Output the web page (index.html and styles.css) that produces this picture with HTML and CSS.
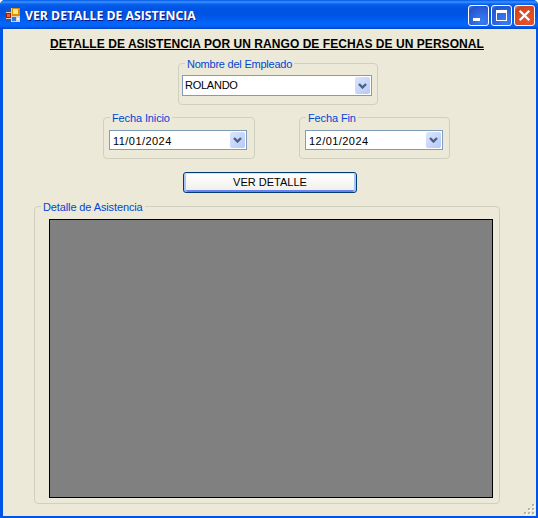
FILE: index.html
```html
<!DOCTYPE html>
<html lang="es">
<head>
<meta charset="utf-8">
<title>VER DETALLE DE ASISTENCIA</title>
<link rel="stylesheet" href="styles.css">
</head>
<body>
<div class="window">
  <header class="titlebar">
    <svg class="app-icon" width="14" height="14" viewBox="0 0 14 14" shape-rendering="crispEdges">
      <rect width="14" height="14" fill="#d6d3c8"/>
      <rect width="5" height="4" fill="#1855c0"/>
      <rect y="5" width="5" height="5" fill="#a91508"/><rect x="1" y="6" width="3" height="3" fill="#ef5737"/>
      <rect x="6" width="8" height="8" fill="#d99000"/><rect x="7" y="1" width="5" height="5" fill="#ffe482"/>
      <rect y="11" width="5" height="3" fill="#2459b0"/><rect x="6" y="9" width="4" height="4" fill="#3977d4"/>
      <rect x="11" y="10" width="2" height="2" fill="#f7f5ed"/>
    </svg>
    <h1 class="title"><span class="title-text">VER DETALLE DE ASISTENCIA</span></h1>
    <div class="controls">
      <button class="control" aria-label="Minimizar"><svg width="19" height="19" shape-rendering="crispEdges"><path d="M4 12h7v3H4z" fill="#fff"/></svg></button>
      <button class="control" aria-label="Maximizar"><svg width="19" height="19" shape-rendering="crispEdges"><path fill-rule="evenodd" d="M4 4h11v11H4zM5 7h9v7H5z" fill="#fff"/></svg></button>
      <button class="control close" aria-label="Cerrar"><svg width="19" height="19"><path d="M4.7 4.7l9.6 9.6M14.3 4.7l-9.6 9.6" stroke="#fff" stroke-width="2.3"/></svg></button>
    </div>
  </header>
  <main class="form">
    <h2 class="heading"><span class="heading-text">DETALLE DE ASISTENCIA POR UN RANGO DE FECHAS DE UN PERSONAL</span></h2>
    <section class="group employee">
      <span class="legend">Nombre del Empleado</span>
      <div class="combo"><span class="value">ROLANDO</span><span class="arrow"><svg width="9" height="6" viewBox="0 0 9 6"><path d="M1 1l3.5 3.5L8 1" fill="none" stroke="#4d6185" stroke-width="2.4"/></svg></span></div>
    </section>
    <div class="dates">
      <section class="group date">
        <span class="legend">Fecha Inicio</span>
        <div class="combo"><span class="value">11/01/2024</span><span class="arrow"><svg width="9" height="6" viewBox="0 0 9 6"><path d="M1 1l3.5 3.5L8 1" fill="none" stroke="#4d6185" stroke-width="2.4"/></svg></span></div>
      </section>
      <section class="group date end">
        <span class="legend">Fecha Fin</span>
        <div class="combo"><span class="value">12/01/2024</span><span class="arrow"><svg width="9" height="6" viewBox="0 0 9 6"><path d="M1 1l3.5 3.5L8 1" fill="none" stroke="#4d6185" stroke-width="2.4"/></svg></span></div>
      </section>
    </div>
    <button class="detail-button"><span>VER DETALLE</span></button>
    <section class="group results">
      <span class="legend">Detalle de Asistencia</span>
      <div class="grid"></div>
    </section>
    <svg class="grip" width="12" height="12" shape-rendering="crispEdges">
      <path d="M9 1h2v2H9zM5 5h2v2H5zM9 5h2v2H9zM1 9h2v2H1zM5 9h2v2H5zM9 9h2v2H9z" fill="#fff"/>
      <path d="M8 0h2v2H8zM4 4h2v2H4zM8 4h2v2H8zM0 8h2v2H0zM4 8h2v2H4zM8 8h2v2H8z" fill="#b8b4a2"/>
    </svg>
  </main>
</div>
</body>
</html>
```
FILE: styles.css
```css
* { box-sizing: border-box; }
body { margin: 0; background: #fff; font: 11px/13px "Liberation Sans", Arial, sans-serif; color: #000; }
h1, h2 { margin: 0; }
button { padding: 0; margin: 0; font: inherit; }
svg { display: block; }

.window {
  width: 538px;
  height: 518px;
  display: flex;
  flex-direction: column;
  overflow: hidden;
  background: #0054e3;
  border-radius: 5px 5px 0 0;
}
.titlebar {
  flex: none;
  height: 29px;
  display: flex;
  align-items: flex-start;
  padding: 5px 3px 0 6px;
  background: linear-gradient(#0058e6 0, #3a93ff 2px, #0a62ee 4px, #0054e3 8px, #0054e3 15px, #0364fb 23px, #0364fb 26px, #0046c8 29px);
}
.app-icon { margin-top: 3px; }
.title {
  flex: 1;
  margin: 2px 0 0 5px;
  font: bold 13px/16px "Open Sans", sans-serif;
  color: #fff;
  text-shadow: 1px 1px 0 #0a1883;
  white-space: nowrap;
}
.title-text { display: inline-block; transform: scaleX(.942); transform-origin: left; }
.controls { display: flex; gap: 2px; }
.control {
  width: 21px;
  height: 21px;
  border: 1px solid #fff;
  border-radius: 3px;
  background: radial-gradient(circle at 70% 80%, #3a7df5 0, #2b62dc 55%, #2453cc 80%, #5a86e8 100%);
}
.control.close { background: radial-gradient(circle at 70% 80%, #e6532c 0, #da4a24 55%, #cc4420 80%, #e68a70 100%); }

.form {
  position: relative;
  flex: 1;
  display: flex;
  flex-direction: column;
  margin: 0 2px 2px 3px;
  padding-top: 7px;
  background: #ece9d8;
}
.heading {
  align-self: flex-start;
  width: 434px;
  height: 14px;
  margin-left: 47px;
  border-bottom: 1px solid #000;
  font: bold 12px/16px "Liberation Sans", Arial, sans-serif;
  letter-spacing: .05px;
  white-space: nowrap;
}
.group {
  position: relative;
  display: flex;
  flex-direction: column;
  border: 1px solid #d0d0bf;
  border-radius: 4px;
}
.legend {
  position: absolute;
  top: -6px;
  left: 6px;
  padding: 0 2px;
  background: #ece9d8;
  color: #0046d5;
  letter-spacing: -.12px;
  white-space: nowrap;
}
.employee .legend { letter-spacing: -.23px; }
.combo {
  display: flex;
  justify-content: space-between;
  align-items: stretch;
  height: 21px;
  padding: 1px;
  border: 1px solid #7f9db9;
  background: #fff;
}
.value { padding-left: 2px; line-height: 17px; }
.arrow {
  width: 15px;
  display: flex;
  align-items: center;
  justify-content: center;
  border-radius: 2px;
  background: linear-gradient(135deg, #dbe5ff, #b5c9f7);
}
.employee { width: 200px; height: 42px; margin: 13px 0 0 175px; padding: 11px 5px 0 3px; }
.employee .value { padding-left: 1px; letter-spacing: -.25px; }
.dates { display: flex; gap: 44px; margin: 12px 0 0 100px; }
.date { width: 152px; height: 42px; padding: 12px 7px 0 5px; }
.date.end { width: 151px; padding-right: 6px; }
.date .combo { height: 20px; }
.date .value { letter-spacing: .45px; line-height: 18px; }
.detail-button {
  width: 174px;
  height: 21px;
  margin: 13px 0 0 180px;
  border: 1px solid #003c74;
  border-radius: 3px;
  background: linear-gradient(#fff, #f0efe9);
  box-shadow: inset 0 1px #cee7ff, inset 2px 0 #a9c5f5, inset -2px 0 #a9c5f5, inset 0 -2px #6982ee;
  color: #000;
}
.results { width: 466px; height: 298px; margin: 13px 0 0 31px; padding: 12px 6px 5px 14px; }
.grid { flex: 1; border: 1px solid #000; background: #808080; }
.grip { position: absolute; right: 0; bottom: 0; }
```
